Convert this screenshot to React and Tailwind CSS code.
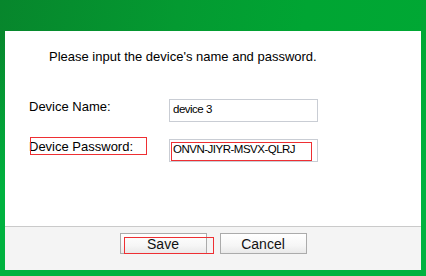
const font = { fontFamily: '"Liberation Sans", Arial, sans-serif' };

export default function App() {
  return (
    <div
      className="relative flex h-[276px] w-[426px] flex-col px-[5px] pt-[31px] pb-[6px] bg-[linear-gradient(180deg,rgba(0,178,64,0)_0px,rgba(0,178,64,0)_34px,#00b23f_190px),linear-gradient(100deg,#07862c_0%,#049a31_38%,#00a533_65%,#00a934_100%)]"
      style={font}
    >
      <div className="flex flex-1 flex-col bg-white">
        <div className="flex-1">
          <p className="pt-[18px] pl-[44px] text-[13px] leading-[15px] text-black">
            Please input the device's name and password.
          </p>

          <div className="mt-[35px] flex flex-col gap-[17px]">
            <FieldRow label="Device Name:" value="device 3" />
            <FieldRow label="Device Password:" value="ONVN-JIYR-MSVX-QLRJ" />
          </div>
        </div>

        <div className="flex h-[44px] justify-center gap-[13px] border-t border-[#cacaca] bg-[#f4f4f4] pt-[6px]">
          <DialogButton>Save</DialogButton>
          <DialogButton>Cancel</DialogButton>
        </div>
      </div>

      {/* red annotation frames drawn over the screenshot */}
      <span className="pointer-events-none absolute top-[137px] left-[30px] z-10 h-[18px] w-[117px] border border-[#ee2f33]" />
      <span className="pointer-events-none absolute top-[142px] left-[171px] z-10 h-[19px] w-[141px] border border-[#ee2f33]" />
      <span className="pointer-events-none absolute top-[237px] left-[124px] z-10 h-[17px] w-[90px] border border-[#ee2f33]" />
    </div>
  );
}

function FieldRow({ label, value }) {
  return (
    <div className="flex items-start">
      <div className="w-[164px] shrink-0 pl-[24px] text-[13px] leading-[15px] text-black">{label}</div>
      <div className="h-[23px] w-[149px] shrink-0 border border-[#c9cdd4] bg-white pt-[3px] pl-[3px] text-[11.5px] leading-[13px] tracking-[-0.5px] text-black">
        {value}
      </div>
    </div>
  );
}

function DialogButton({ children }) {
  return (
    <button
      type="button"
      className="flex h-[21px] w-[87px] items-center justify-center border border-[#ababab] bg-[linear-gradient(180deg,#ffffff_0%,#f6f6f6_60%,#e9e9e9_100%)] text-[14px] leading-none text-[#111]"
    >
      {children}
    </button>
  );
}
